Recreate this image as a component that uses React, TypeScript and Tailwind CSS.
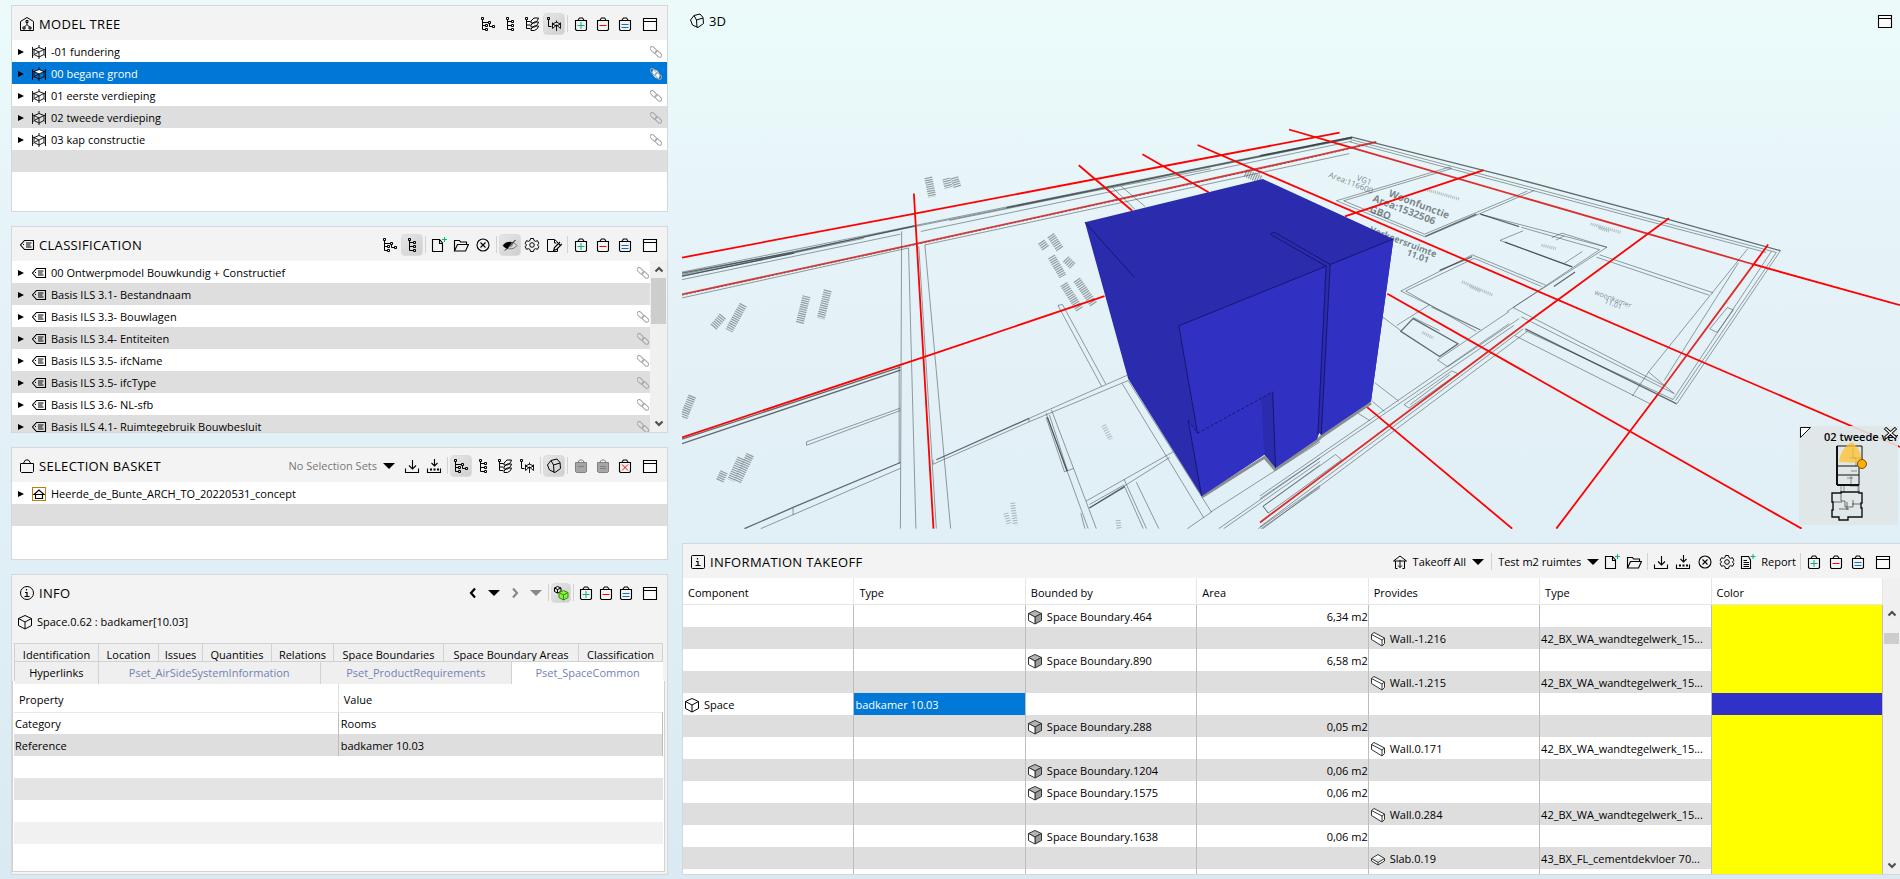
import type { ReactNode } from 'react';

type IconProps = { className?: string };

function Svg({ children, className = 'size-4', label }: { children: ReactNode; className?: string; label?: string }) {
  return (
    <svg viewBox="0 0 16 16" className={`shrink-0 ${className}`} fill="none" stroke="currentColor" aria-label={label}>
      {children}
    </svg>
  );
}

/* ---------- icons ---------- */

const TreeElements = () => (
  <Svg>
    <path d="M1.5 1.5h2v2h-2zM8.5 5.5h2v2h-2zM12.5 9.5h2v2h-2zM5.5 8.5h2v2h-2zM5.5 12.5h2v2h-2zM2.5 4v9.5h3M2.5 6.5h6M2.5 9.5h3M9.5 8v2.5h3" />
  </Svg>
);

const TreeList = () => (
  <Svg>
    <path d="M4.5 1.5h2v2h-2zM9.5 4.5h2v2h-2zM9.5 8.5h2v2h-2zM9.5 12.5h2v2h-2zM5.5 4v9.5h4M5.5 5.5h4M5.5 9.5h4" />
  </Svg>
);

const TreeLayers = () => (
  <Svg>
    <path d="M1.5 1.5h2v2h-2zM2.5 4v8.5h4M2.5 5.5h4M2.5 9h4" />
    <path d="M7 5l3-3h4.500l-1 2.500-3 2.500H7zM7 9l3-3h4.500l-1 2.500-3 2.500H7zM7 13l3-3h4.500l-1 2.500-3 2H7z" />
  </Svg>
);

const TreeStorey = () => (
  <Svg>
    <path d="M1.5 1.5h2v2h-2zM2.5 4v6.5h3" />
    <path d="M6.5 6.5v6M14.5 6.5v6M10.5 4.5v2M10.5 9v6M6.5 8l4-2 4 2-4 2zM6.5 12.500l4-3.500 4 3.500" strokeWidth="0.9" />
  </Svg>
);

const Storey = ({ className = 'size-4' }: IconProps) => (
  <Svg className={className}>
    <path d="M3 5.500L8 3.500l5 2-5 2.500z" strokeWidth="0.9" />
    <path d="M1.500 3v11M14.500 3v11M8 1v2.500M8 8v7M1.500 5L3 5.500v5L8 13l5-2.500v-5l1.500-.5M1.500 12l1.500-1.500M14.500 12L13 10.500M4 10l4-2" fill="none" strokeWidth="0.9" />
  </Svg>
);

const Bag = ({ sign }: { sign: 'add' | 'remove' | 'set' | 'clear' }) => (
  <Svg>
    <path d="M2.500 4.500h11v9l-1 1h-9l-1-1zM5 4l1.500-2h3L11 4" strokeWidth="1.1" />
    {sign === 'add' && <path d="M4.500 9.500h7M8 6v7" stroke="#00b868" />}
    {sign === 'remove' && <path d="M4.500 9.500h7" stroke="#f00" />}
    {sign === 'set' && <path d="M4.500 8.500h7M4.500 11.500h7" stroke="#0c6fc9" />}
    {sign === 'clear' && <path d="M5 6.500l6 6M11 6.500l-6 6" stroke="#f00" />}
  </Svg>
);

const BagOff = ({ sign }: { sign: 'remove' | 'set' }) => (
  <Svg className="size-4 text-[#808080]">
    <path d="M5 4l1.500-2h3L11 4" />
    <path d="M2.500 4.500h11v9l-1 1h-9l-1-1z" fill="#a6a6a6" />
    <path d={sign === 'remove' ? 'M5 8.500h6' : 'M5 8.500h6M5 10.500h6'} />
  </Svg>
);

const Maximize = () => (
  <Svg>
    <path d="M1.500 2.500h13v12h-13zM1.500 5.500h13" fill="#fbfbfb" strokeWidth="1.1" />
  </Svg>
);

const FileNew = () => (
  <Svg>
    <path d="M8.500 2.500h-7v12h10V6zM8.500 2.500v4h3" strokeWidth="1.1" />
    <path d="M13.500 0v5M11 2.500h5" stroke="#00b868" />
  </Svg>
);

const FolderOpen = () => (
  <Svg>
    <path d="M1.500 14V3.500h5l1 1.500h6v2.500M1.500 14l3-6.500h11l-3 6.500z" strokeWidth="1.1" />
  </Svg>
);

const CircleX = () => (
  <Svg>
    <circle cx="8" cy="8" r="6" strokeWidth="1.1" />
    <path d="M5.500 5.500l5 5M10.500 5.500l-5 5" strokeWidth="1.1" />
  </Svg>
);

const EyeHalf = () => (
  <Svg>
    <path d="M1 8.500c3-4.500 11-4.500 14 0-3 4.500-11 4.500-14 0z" stroke="#777" />
    <path d="M1 8.500C3 5.500 6 4.500 10 5.200L5.500 11.500C3.500 11 2 10 1 8.500z" fill="#000" stroke="none" />
    <path d="M10 5.500c2 1.500 1 4.500-2.500 5z" fill="#999" stroke="none" />
    <path d="M3 13.500L13.500 3" />
  </Svg>
);

const Gear = () => (
  <Svg>
    <path d="M6.500 1.500h3l.5 2 1.500.8 2-.6 1.300 2.600-1.300 1.700 1.300 1.700-1.300 2.600-2-.6-1.500.8-.5 2h-3l-.5-2-1.500-.8-2 .6-1.300-2.600L2.500 8 1.200 6.300l1.300-2.600 2 .6L6 3.500z" />
    <circle cx="8" cy="8" r="2.300" />
  </Svg>
);

const FileEdit = () => (
  <Svg>
    <path d="M11.500 6V5L8.500 2.500h-7v12h10V12M8.500 2.500V6h2" />
    <path d="M14 5L8.500 10.500l-.8 2.800 2.800-.8L16 7M12.500 6.500l2 2" strokeWidth="1.200" />
  </Svg>
);

const Import = ({ dots = false }: { dots?: boolean }) => (
  <Svg>
    <path d={dots ? 'M8.500 1v6.500M5.500 5l3 3 3-3' : 'M8.500 2v8.500M5 7.500l3.500 3.500L12 7.500'} strokeWidth="1.1" />
    <path d="M1.500 10.500v4h13v-4" strokeWidth="1.100" />
    {dots && <path d="M4 11.500h2M7.500 11.500h2M11 11.500h2" strokeWidth="2" />}
  </Svg>
);

const ViewCube = () => (
  <Svg>
    <path d="M5 2.500l6-1.500 3 3.500.5 6-5.500 4-5.500-2.500L1.500 7zM5 2.500l2.500 4.500L14 5M7.500 7L8 14.500" strokeWidth="1" />
  </Svg>
);

const Cube = ({ className = 'size-4' }: IconProps) => (
  <Svg className={className}>
    <path d="M8 1.500l6.500 3v7L8 15l-6.500-3.500v-7zM1.500 4.500L8 8l6.500-3.500M8 8v7" />
  </Svg>
);

const CubeShaded = () => (
  <Svg className="size-4 text-[#333]">
    <path d="M1.500 4.500L8 1.500l6.500 3L8 8z" fill="#b5b5b5" />
    <path d="M8 8l6.500-3.500v7L8 15z" fill="#9c9c9c" />
    <path d="M1.500 4.500L8 8v7l-6.500-3.500z" fill="#fff" />
  </Svg>
);

const WallIcon = () => (
  <Svg className="size-4 text-[#333]">
    <path d="M1.500 3.500l2.500-2L14.500 7v5.500L12 15 1.500 8.500zM1.500 3.500L12 9v5.500M12 9l2.500-2" fill="#fff" />
  </Svg>
);

const SlabIcon = () => (
  <Svg className="size-4 text-[#333]">
    <path d="M1.500 7.500L8 3.500l6.500 4v2.500L8 14l-6.500-4zM1.500 7.500L8 11.500l6.500-4M8 11.500V14" fill="#fff" />
  </Svg>
);

const TagIcon = () => (
  <Svg>
    <path d="M5.500 3.500h9v9h-9L1.500 8zM7 6h5.500M7 8h4.500M7 10h5.500" strokeWidth="1.100" />
    <path d="M4 7.500h1" />
  </Svg>
);

const ModelTreeIcon = () => (
  <Svg>
    <path d="M8 1.500l6.500 4v9h-13v-9z" />
    <path d="M7 4.500h2v2H7zM8 6.500v2L5.500 11M8 8.500l2.500 2.500M4 11h2v2H4zM10 11h2v2h-2z" />
  </Svg>
);

const BasketIcon = () => (
  <Svg>
    <path d="M1.500 5.500h13v8l-1 1h-11l-1-1zM4.500 5l2-3h3l2 3" />
  </Svg>
);

const InfoIcon = ({ square = false }: { square?: boolean }) => (
  <Svg>
    {square ? <rect x="1.500" y="1.500" width="13" height="13" rx="1" /> : <circle cx="8" cy="8" r="6.500" />}
    <path d="M7.500 4v1.500M6 7.500h2v4M5.500 11.500h5" strokeWidth="1.200" />
  </Svg>
);

const ModelIcon = () => (
  <Svg>
    <rect x="1.500" y="1.500" width="13" height="13" stroke="#c47a0a" />
    <path d="M3 8.500l5-4.500 5 4.500zM4.500 8.500v4h7v-4" strokeWidth="1.100" />
  </Svg>
);

const TakeoffIcon = () => (
  <Svg>
    <path d="M1.500 7L8 2l6.500 5zM3.500 7v7.500h2M12.500 7v7.500h-2M8 6v7.500M6 11.500l2 2 2-2" />
  </Svg>
);

const ReportIcon = () => (
  <Svg>
    <path d="M8.500 2.500h-7v12h9V6zM3.500 6.500H7M3.500 8.500H9M3.500 10.500H9M3.500 12.500H9" strokeWidth="1.100" />
    <path d="M13 0v5M10.500 2.500h5" stroke="#00b868" />
  </Svg>
);

const SpacePair = () => (
  <Svg>
    <path d="M4.500 1.500l3.500 1.500v3.500L4.500 8 1.500 6.500V3zM1.500 3l3 1.500L8 3M4.500 4.500V8" />
    <path d="M10.500 5.500l4.500 2v5L10.500 15 6 12.500v-5z" fill="#8cf03c" stroke="#2c8a10" />
    <path d="M6 7.500l4.500 2.500L15 7.500M10.500 10v5" stroke="#2c8a10" />
  </Svg>
);

const LinkIcon = ({ lit = false }: { lit?: boolean }) => (
  <svg viewBox="0 0 12 12" className="size-3 shrink-0" fill="none" stroke="#a6a6a6">
    {lit && <ellipse cx="6" cy="6" rx="3" ry="5" transform="rotate(-30 6 6)" fill="#fff" stroke="none" />}
    <rect x="-.5" y="2.200" width="7.500" height="4" rx="2" transform="rotate(45 3.800 4.200)" />
    <rect x="4.700" y="5.800" width="7.500" height="4" rx="2" transform="rotate(45 8.200 7.800)" />
  </svg>
);

const Chevron = ({ d, className = 'text-black' }: { d: string; className?: string }) => (
  <Svg className={`size-4 ${className}`}>
    <path d={d} strokeWidth="2.200" />
  </Svg>
);

const Caret = ({ className = 'text-black' }: IconProps) => (
  <svg viewBox="0 0 12 6" className={`h-[6px] w-3 shrink-0 ${className}`} fill="currentColor">
    <path d="M0 0h12L6 6z" />
  </svg>
);

const Expander = () => (
  <button type="button" aria-label="Expand" className="ml-[6px] flex w-3 shrink-0">
    <svg viewBox="0 0 6 6" className="size-[6px]">
      <path d="M0 0l6 3-6 3z" fill="#000" />
    </svg>
  </button>
);

/* ---------- shared pieces ---------- */

function Tool({ label, pressed, disabled, compact, children }: { label: string; pressed?: boolean; disabled?: boolean; compact?: boolean; children: ReactNode }) {
  return (
    <button
      type="button"
      aria-label={label}
      aria-pressed={pressed}
      disabled={disabled}
      className={`flex shrink-0 items-center justify-center rounded ${compact ? 'size-5' : 'size-[22px]'} ${
        pressed ? 'border border-[#dcdcdc] bg-linear-to-br from-[#e6e6e6] to-[#cfcfcf]' : ''
      }`}
    >
      {children}
    </button>
  );
}

const Sep = () => <span className="mx-[2px] h-[17px] w-px shrink-0 bg-[#d2d2d2]" />;

const BagTools = ({ compact }: { compact?: boolean }) => (
  <>
    <Tool label="Add to basket" compact={compact}><Bag sign="add" /></Tool>
    <Tool label="Remove from basket" compact={compact}><Bag sign="remove" /></Tool>
    <Tool label="Set basket" compact={compact}><Bag sign="set" /></Tool>
  </>
);

const MaximizeTool = () => (
  <div className="ml-[3px]">
    <Tool label="Maximize"><Maximize /></Tool>
  </div>
);

function Panel({ icon, title, tools, edge = 'border', children }: { icon: ReactNode; title: string; tools: ReactNode; edge?: string; children: ReactNode }) {
  return (
    <section className={`flex min-h-0 flex-col overflow-hidden border-[#d4d8d9] bg-white ${edge}`}>
      <header className="flex h-[34px] shrink-0 items-center bg-[#f3f3f3] pt-px pr-[6px] pl-[7px]">
        {icon}
        <h2 className="ml-1 text-[13px] tracking-wide whitespace-nowrap">{title}</h2>
        <div className="ml-auto flex items-center">{tools}</div>
      </header>
      {children}
    </section>
  );
}

function TreeRow({ icon, label, selected, link = true, tight }: { icon: ReactNode; label: string; selected?: boolean; link?: boolean; tight?: boolean }) {
  return (
    <li
      className={`flex h-[22px] items-center pt-px ${tight ? 'pr-px' : 'pr-[5px]'} ${
        selected ? 'bg-[#0078d7] text-white' : 'odd:bg-white even:bg-[#dedede]'
      }`}
    >
      <Expander />
      <span className="ml-[1px] text-black">{icon}</span>
      <span className="ml-1 whitespace-nowrap">{label}</span>
      {link && <span className="ml-auto"><LinkIcon lit={selected} /></span>}
    </li>
  );
}

function ScrollBar({ className, thumb }: { className: string; thumb: string }) {
  return (
    <div className={`flex w-[17px] shrink-0 flex-col items-center bg-[#f0f0f0] ${className}`}>
      <Svg className="h-[17px] w-4 text-[#505050]"><path d="M4.500 10L8 6.500l3.500 3.500" strokeWidth="2.200" /></Svg>
      <div className={`w-[15px] bg-[#cdcdcd] ${thumb}`} />
      <Svg className="mt-auto h-[17px] w-4 text-[#505050]"><path d="M4.500 6L8 9.500 11.500 6" strokeWidth="2.200" /></Svg>
    </div>
  );
}

/* ---------- left column ---------- */

const storeys = ['-01 fundering', '00 begane grond', '01 eerste verdieping', '02 tweede verdieping', '03 kap constructie'];

const classifications = [
  '00 Ontwerpmodel Bouwkundig + Constructief',
  'Basis ILS 3.1- Bestandnaam',
  'Basis ILS 3.3- Bouwlagen',
  'Basis ILS 3.4- Entiteiten',
  'Basis ILS 3.5- ifcName',
  'Basis ILS 3.5- ifcType',
  'Basis ILS 3.6- NL-sfb',
  'Basis ILS 4.1- Ruimtegebruik Bouwbesluit',
];

function ModelTree() {
  return (
    <Panel
      icon={<ModelTreeIcon />}
      title="MODEL TREE"
      tools={
        <>
          <Tool label="Components"><TreeElements /></Tool>
          <Tool label="List"><TreeList /></Tool>
          <Tool label="Layers"><TreeLayers /></Tool>
          <Tool label="Storeys" pressed><TreeStorey /></Tool>
          <Sep />
          <BagTools />
          <MaximizeTool />
        </>
      }
    >
      <ul>
        {storeys.map((s) => (
          <TreeRow
            key={s}
            icon={<Storey className={s.startsWith('00') ? 'size-4 fill-white' : 'size-4'} />}
            label={s}
            selected={s.startsWith('00')}
          />
        ))}
        <li className="h-[22px] bg-[#dedede]" />
      </ul>
    </Panel>
  );
}

function Classification() {
  return (
    <Panel
      icon={<TagIcon />}
      title="CLASSIFICATION"
      tools={
        <>
          <Tool label="Components"><TreeElements /></Tool>
          <Tool label="List" pressed><TreeList /></Tool>
          <Sep />
          <Tool label="New"><FileNew /></Tool>
          <Tool label="Open"><FolderOpen /></Tool>
          <Tool label="Close"><CircleX /></Tool>
          <Sep />
          <Tool label="Hide empty" pressed><EyeHalf /></Tool>
          <Tool label="Settings"><Gear /></Tool>
          <Tool label="Edit"><FileEdit /></Tool>
          <Sep />
          <BagTools />
          <MaximizeTool />
        </>
      }
    >
      <div className="flex min-h-0 flex-1">
        <ul className="min-w-0 flex-1 overflow-hidden">
          {classifications.map((c, i) => (
            <TreeRow key={c} icon={<TagIcon />} label={c} link={i !== 1} tight />
          ))}
        </ul>
        <ScrollBar className="" thumb="h-[46px]" />
      </div>
    </Panel>
  );
}

function SelectionBasket() {
  return (
    <Panel
      icon={<BasketIcon />}
      title="SELECTION BASKET"
      tools={
        <>
          <select aria-label="Selection sets" className="field-sizing-content appearance-none bg-transparent text-[#777]">
            <option>No Selection Sets</option>
          </select>
          <span className="mr-[6px] ml-[6px]"><Caret /></span>
          <Tool label="Import"><Import /></Tool>
          <Tool label="Import set"><Import dots /></Tool>
          <Sep />
          <Tool label="Components" pressed><TreeElements /></Tool>
          <Tool label="List"><TreeList /></Tool>
          <Tool label="Layers"><TreeLayers /></Tool>
          <Tool label="Storeys"><TreeStorey /></Tool>
          <Sep />
          <Tool label="Show in 3D" pressed><ViewCube /></Tool>
          <Sep />
          <Tool label="Remove from basket" disabled><BagOff sign="remove" /></Tool>
          <Tool label="Set basket" disabled><BagOff sign="set" /></Tool>
          <Tool label="Clear basket"><Bag sign="clear" /></Tool>
          <MaximizeTool />
        </>
      }
    >
      <ul>
        <TreeRow icon={<ModelIcon />} label="Heerde_de_Bunte_ARCH_TO_20220531_concept" link={false} />
        <li className="h-[22px] bg-[#dedede]" />
      </ul>
    </Panel>
  );
}

const tabs = ['Identification', 'Location', 'Issues', 'Quantities', 'Relations', 'Space Boundaries', 'Space Boundary Areas', 'Classification'];

function Info() {
  const tab = 'h-full border-t border-r border-[#d2d2d2] bg-[#efefef] text-center leading-[22px] whitespace-nowrap';
  return (
    <Panel
      icon={<InfoIcon />}
      title="INFO"
      tools={
        <>
          <div className="flex gap-px">
            <Tool label="Back" compact><Chevron d="M10 3.500L6 8l4 4.500" /></Tool>
            <Tool label="Back history" compact><Caret /></Tool>
            <Tool label="Forward" compact><Chevron d="M6 3.500L10 8l-4 4.500" className="text-[#888]" /></Tool>
            <Tool label="Forward history" compact><Caret className="text-[#888]" /></Tool>
          </div>
          <Sep />
          <Tool label="Follow selection" pressed compact><SpacePair /></Tool>
          <Sep />
          <BagTools compact />
          <MaximizeTool />
        </>
      }
    >
      <div className="flex min-h-0 flex-1 flex-col bg-[#f3f3f3]">
        <div className="mb-2 flex h-[26px] shrink-0 items-center pl-[5px]">
          <Cube />
          <span className="ml-1">Space.0.62 : badkamer[10.03]</span>
        </div>
        <div role="tablist" className="mr-1 ml-[2px] border-l border-[#d2d2d2]">
          <div className="grid h-[18px] grid-cols-[84fr_60fr_44fr_69fr_62fr_110fr_135fr_84fr]">
            {tabs.map((t) => (
              <button key={t} type="button" role="tab" className={tab}>{t}</button>
            ))}
          </div>
          <div className="relative grid h-5 grid-cols-[84fr_222fr_192fr_151fr]">
            <button type="button" role="tab" className={tab}>Hyperlinks</button>
            <button type="button" role="tab" className={`${tab} text-[#7183b5]`}>Pset_AirSideSystemInformation</button>
            <button type="button" role="tab" className={`${tab} text-[#7183b5]`}>Pset_ProductRequirements</button>
            <button type="button" role="tab" aria-selected="true" className="h-full border-t border-[#d2d2d2] bg-white leading-[18px] whitespace-nowrap text-[#7183b5]">
              Pset_SpaceCommon
            </button>
          </div>
        </div>
        <div className="mr-[2px] mb-[2px] flex min-h-0 flex-1 flex-col overflow-hidden border-r border-b border-l border-[#d2d2d2] bg-white px-px">
          <table className="w-full table-fixed border-collapse">
            <thead>
              <tr className="h-[31px] border-b border-[#e8e8e8] text-left">
                <th className="border-r border-[#e0e0e0] pt-2 pl-[5px] font-normal">Property</th>
                <th className="pt-2 pl-[5px] font-normal">Value</th>
              </tr>
            </thead>
            <tbody>
              <tr className="h-[22px]">
                <td className="border-r border-[#bdbdbd] pt-[2px] pl-px">Category</td>
                <td className="border-r border-[#bdbdbd] pt-[2px] pl-[2px]">Rooms</td>
              </tr>
              <tr className="h-[22px] bg-[#dedede]">
                <td className="border-r border-[#bdbdbd] pt-[2px] pl-px">Reference</td>
                <td className="border-r border-[#bdbdbd] pt-[2px] pl-[2px]">badkamer 10.03</td>
              </tr>
            </tbody>
          </table>
          <div className="mt-[22px] h-[22px] shrink-0 bg-[#e4e4e4]" />
          <div className="mt-[22px] h-[22px] shrink-0 bg-[#f1f1f1]" />
        </div>
      </div>
    </Panel>
  );
}

/* ---------- 3D view ---------- */

const westLines = `
M5 790L575 655L1646 398M5 797L575 658L1646 402M5 803L450 692M5 812L540 680M590 672L1646 410M660 640L1000 558L1300 490
M5 865L560 720M600 711L1640 446M543 672L540 1535M560 720L578 1535M585 715L628 1535M600 711L663 1535
M310 1283L540 1185M310 1293L540 1192M310 1283V1293M537 1062V1345M198 1535L540 1360M277 1475V1495
M620 1348L855 1225L1098 1105M855 1215L1095 1090M855 1215V1225M620 1335V1348
M926 887L1033 1122M937 884L1043 1115M926 887L937 884M897 1212L942 1370L965 1360M905 1205L950 1368M910 1190L1020 1535M897 1200L1000 1535
M1083 1113L1283 1503M1098 1105L1302 1487M995 1455L1208 1312M1003 1475L1200 1328M1003 1465L1088 1408
M1088 1392L1143 1535M1090 1415L1135 1535M1118 1400L1173 1535M982 1490L992 1535
M1060 545L1115 608M1080 540L1140 600M1300 1487L1568 1283M1243 1535L1302 1487
M1320 1535L1568 1330M1332 1535L1568 1340M1568 1350L1428 1470L1442 1490M1417 1535L1568 1410M1424 1535L1568 1416`;

const westHeavy = `
M5 793L280 732L575 656M5 801L280 735M800 603L1000 555L1250 495L1646 400M5 1275L540 1066M5 1288L540 1075
M158 1535L280 1472L540 1343M628 1335L855 1215M900 1212L948 1368M1003 1475L1090 1413`;

const eastLines = `
M222 405L1265 733L1018 1163M220 412L1240 733M1253 730L1012 1160M1195 722L952 1080M1172 763L990 1105M1275 728L1020 1175
M1015 1143L640 920M1012 1160L650 960M955 1172L625 975M990 1120L620 893M952 1080L912 1150M952 1080L1015 1143
M465 485L187 583L405 688L672 553M468 490L205 583L403 680L655 555M465 485L470 490
M540 622L850 718L620 893M645 670L588 698L765 775M715 690L740 677L850 718M725 697L745 685M640 660L832 725L605 905M832 740L1110 850M825 747L1100 857M790 730L745 765
M520 740L345 845L540 958M525 750L357 845L530 962M520 740L700 828M525 750L690 832M610 905L435 1045L460 1065L635 925
M415 885L335 945M420 892L540 958M300 920L345 960M375 922L440 960
M610 940L305 1190L0 1440M622 945L0 1448M645 955L0 1530M655 962L5 1537
M470 1077L353 1175L365 1185L485 1085ZM465 1088L368 1175M185 1320L8 1470L20 1490L200 1335Z
M282 1112L340 1165M275 1165L305 1195M240 1200L270 1222M1145 893L1160 900L1120 965L1102 955Z`;

const eastHeavy = `
M0 452L225 398L625 518L1000 637L1275 728M540 622L635 658M600 703L765 775M375 925L485 998L440 1035L345 962ZM440 785L520 745M405 686L530 622M720 832L772 790M1020 1172L650 955`;

// Lettering too foreshortened to read, drawn as hatched strokes.
const hatchLabels = `
M608 515L618 572M652 518L658 545M672 515L680 545M310 860L293 940M362 843L345 925M155 885L120 960M105 918L82 950
M30 1150L8 1215M172 1320L140 1400M150 1330L125 1395M108 1370L97 1398M908 683L932 725M885 702L897 722
M910 745L938 802M945 752L962 772M940 825L980 900M972 812L1014 885M1385 502L1425 522`;

const faintLabels = 'M1038 1235L1055 1275M815 1460L822 1525M798 1490L806 1520M1073 1510L1076 1535';

const planLabels = [
  { x: 1356, y: 180, size: 8, text: 'VG1' },
  { x: 1328, y: 177, size: 8, text: 'Area:116600' },
  { x: 1388, y: 196, size: 10, text: 'Woonfunctie' },
  { x: 1372, y: 201, size: 10, text: 'Area:1532506' },
  { x: 1369, y: 212, size: 10, text: 'GBO' },
  { x: 1369, y: 232, size: 9, text: 'Verkeersruimte' },
  { x: 1406, y: 255, size: 9, text: '11.01' },
  { x: 1594, y: 294, size: 7, text: 'woonkamer' },
  { x: 1604, y: 303, size: 7, text: '11.01' },
];

function Scene() {
  const west = 'translate(680 0) scale(.40816 .34439)';
  const east = 'translate(1260 0) scale(.40816 .34439)';
  return (
    <svg viewBox="682 0 1218 529" preserveAspectRatio="xMidYMax slice" className="size-full [&_path]:[vector-effect:non-scaling-stroke]" fill="none">
      <g stroke="#3c4648" strokeOpacity="0.65" strokeWidth="0.8">
        <path transform={west} d={westLines} />
        <path transform={east} d={eastLines} />
      </g>
      <g stroke="#2a3032" strokeOpacity="0.7" strokeWidth="1.300">
        <path transform={west} d={westHeavy} />
        <path transform={east} d={eastHeavy} />
      </g>
      <g transform={west} stroke="#4c5658">
        <path d={hatchLabels} strokeWidth="8" strokeDasharray="1.200 1" strokeOpacity="0.55" />
        <path d={faintLabels} strokeWidth="5" strokeDasharray="1 1.500" strokeOpacity="0.4" />
      </g>
      <path
        transform={east}
        d="M405 550L488 578M810 650L885 675M830 662L855 672M495 818L570 857M515 832L540 846M690 712L725 722M398 965L425 982"
        stroke="#5a6466" strokeWidth="3" strokeDasharray="1 1" strokeOpacity="0.4"
      />
      {planLabels.map((l) => (
        <text
          key={l.text + l.x}
          transform={`translate(${l.x} ${l.y}) rotate(21)`}
          fontSize={l.size}
          fontWeight={l.size > 8 ? 700 : 400}
          fill="#3c4648"
          fillOpacity="0.65"
        >
          {l.text}
        </text>
      ))}

      {/* grid axes */}
      <g stroke="#f00" strokeWidth="1.800">
        <path transform={west} d="M5 748L575 620L1616 385M5 1270L597 1037L1040 860M573 562L621 1535M977 480L1108 612M1133 448L1295 558M1268 421L1421 499" />
        <path transform={east} d="M0 498L1568 1298M71 376L222 428M1210 768L1568 886M548 494L208 628M1002 634L650 940M1245 710L1205 775M975 1145L726 1535M312 853L1327 1535M260 1180L618 1535" />
      </g>
      <g stroke="#dd1616" strokeWidth="1.800">
        <path transform={west} d="M5 855L575 709L1568 450L1706 412" strokeOpacity="0.85" />
        <path transform={east} d="M222 428L1210 768M1205 775L975 1145M650 940L0 1517" strokeOpacity="0.9" />
      </g>
      <path transform={west} d="M5 857L575 711L1568 452L1706 414" stroke="#555" strokeDasharray="2 2" strokeWidth="1" strokeOpacity="0.7" />

      {/* selected space */}
      <g transform={west}>
        <path d="M1278 1443L1432 1328L1458 1363L1561 1280L1571 1268L1693 1170" stroke="#8b8f90" strokeWidth="3" />
        <path d="M992 645L1428 520L1748 694L1693 1165L1571 1263L1566 1257L1561 1275L1459 1358L1432 1320L1278 1440L1098 1100Z" fill="#2b2bae" />
        <path d="M1222 946L1583 773L1561 1275L1459 1358L1452 1138L1425 1155L1432 1320L1278 1440L1245 1220L1268 1258Z" fill="#3030c2" />
        <path d="M1593 768L1748 694L1693 1165L1571 1263Z" fill="#3030c2" />
        <path d="M1425 1155L1452 1138L1459 1358L1432 1320Z" fill="#2b2bae" />
        <path
          d="M992 645L1113 805M1222 946L1583 773L1563 1260M1593 768L1748 694M1593 768L1571 1263M1456 674L1593 768M1446 680L1583 773M1222 946L1268 1258M1452 1138L1459 1358M1245 1220L1278 1440M1456 674L1446 680"
          stroke="#14146a" strokeWidth="0.900"
        />
        <path d="M1268 1258L1452 1138M1245 1220L1268 1258" stroke="#14146a" strokeDasharray="3 2" strokeWidth="0.900" />
      </g>
    </svg>
  );
}

function MiniMap() {
  return (
    <div className="absolute right-[2px] bottom-1 h-[99px] w-[99px] overflow-hidden bg-[#e0e5e7]/90">
      <span className="absolute top-[3px] left-[25px] font-semibold whitespace-nowrap">02 tweede ver</span>
      <svg viewBox="0 0 99 99" className="absolute inset-0" fill="none" stroke="#111">
        <path d="M1.500 1.500h10l-10 10z" fill="#fff" />
        <path d="M38 20H63V38M38 20V59M60 39V59M38 40H60M38 49H60M38 59H60" />
        <path d="M38 20V59M38 59H60" strokeWidth="2" />
        <path d="M54 22v10h8M51 32h6v8M52 45h6M52 50v8M48 52h6M45 60v6M42 60v6M51 60h8v5M60 59v7M42 66h3" strokeWidth="0.700" strokeOpacity="0.6" />
        <path d="M33 67H42V66H60V67H63V77H62V82H63V91H49V94H40V91H33V84H34V76H33Z" strokeWidth="1.400" />
        <path d="M42 67v8h4v6h8v-7M48 76v8M34 76h9M53 78h9M40 83h10" strokeWidth="0.800" strokeOpacity="0.7" />
        <path d="M62 37L40 36C41 28 45 20 53 16C60 22 63 28 62 37Z" fill="#ffc02a" fillOpacity="0.75" stroke="none" />
        <circle cx="63" cy="38" r="4.500" fill="#ffad00" stroke="#7a5200" />
      </svg>
      <button type="button" aria-label="Close map" className="absolute top-px right-px">
        <svg viewBox="0 0 13 12" className="h-3 w-[13px]">
          <path d="M1 1l11 10M12 1L1 11" stroke="#000" strokeWidth="3.200" />
          <path d="M1.500 1.500l10 9M11.500 1.500l-10 9" stroke="#fff" strokeWidth="1.400" />
        </svg>
      </button>
    </div>
  );
}

function Viewport() {
  return (
    <section className="relative min-h-0 overflow-hidden">
      <Scene />
      <header className="absolute inset-x-0 top-0 flex h-[42px] items-center pr-1 pl-[7px]">
        <ViewCube />
        <h2 className="ml-1 text-[13px]">3D</h2>
        <div className="ml-auto"><Tool label="Maximize"><Maximize /></Tool></div>
      </header>
      <MiniMap />
    </section>
  );
}

/* ---------- information takeoff ---------- */

type Row = { bound?: string; area?: string; provides?: string; type?: string; space?: string };

const TILE = '42_BX_WA_wandtegelwerk_15...';

const rows: Row[] = [
  { bound: 'Space Boundary.464', area: '6,34 m2' },
  { provides: 'Wall.-1.216', type: TILE },
  { bound: 'Space Boundary.890', area: '6,58 m2' },
  { provides: 'Wall.-1.215', type: TILE },
  { space: 'badkamer 10.03' },
  { bound: 'Space Boundary.288', area: '0,05 m2' },
  { provides: 'Wall.0.171', type: TILE },
  { bound: 'Space Boundary.1204', area: '0,06 m2' },
  { bound: 'Space Boundary.1575', area: '0,06 m2' },
  { provides: 'Wall.0.284', type: TILE },
  { bound: 'Space Boundary.1638', area: '0,06 m2' },
  { provides: 'Slab.0.19', type: '43_BX_FL_cementdekvloer 70...' },
];

const columns = ['Component', 'Type', 'Bounded by', 'Area', 'Provides', 'Type', 'Color'];

function Takeoff() {
  const cell = 'h-[22px] overflow-hidden border-r border-[#bdbdbd] p-0 pt-px whitespace-nowrap';
  return (
    <Panel
      icon={<InfoIcon square />}
      title="INFORMATION TAKEOFF"
      edge="border-y border-l"
      tools={
        <>
          <button type="button" className="flex items-center pr-[5px]">
            <TakeoffIcon />
            <span className="mr-[6px] ml-[5px]">Takeoff All</span>
            <Caret />
          </button>
          <Sep />
          <label className="flex items-center gap-[6px] pl-1">
            <select aria-label="Takeoff definition" className="field-sizing-content appearance-none bg-transparent">
              <option>Test m2 ruimtes</option>
            </select>
            <Caret />
          </label>
          <span className="w-[2px]" />
          <Tool label="New"><FileNew /></Tool>
          <Tool label="Open"><FolderOpen /></Tool>
          <Sep />
          <Tool label="Import"><Import /></Tool>
          <Tool label="Import set"><Import dots /></Tool>
          <Tool label="Close"><CircleX /></Tool>
          <Tool label="Settings"><Gear /></Tool>
          <button type="button" className="flex items-center gap-[5px] px-[2px]">
            <ReportIcon />
            Report
          </button>
          <Sep />
          <BagTools />
          <MaximizeTool />
        </>
      }
    >
      <div className="flex min-h-0 flex-1">
        <div className="min-w-0 flex-1 overflow-hidden">
          <table className="w-full table-fixed border-separate border-spacing-0">
            <thead>
              <tr className="text-left">
                {columns.map((c, i) => (
                  <th key={i} className="h-[27px] border-r border-b border-[#e6e6e6] p-0 pt-[3px] pl-[5px] font-normal">{c}</th>
                ))}
              </tr>
            </thead>
            <tbody>
              {rows.map((r, i) => (
                <tr key={i} className="odd:bg-white even:bg-[#dedede]">
                  <td className={cell}>
                    {r.space && <span className="flex items-center gap-1 pl-px"><Cube /> Space</span>}
                  </td>
                  <td className={`${cell} ${r.space ? 'bg-[#0078d7] text-white' : ''}`}>
                    <span className="pl-px">{r.space}</span>
                  </td>
                  <td className={cell}>
                    {r.bound && <span className="flex items-center gap-1 pl-px"><CubeShaded /> {r.bound}</span>}
                  </td>
                  <td className={`${cell} text-right`}>{r.area}</td>
                  <td className={cell}>
                    {r.provides && (
                      <span className="flex items-center gap-1 pl-px">
                        {r.provides.startsWith('Slab') ? <SlabIcon /> : <WallIcon />} {r.provides}
                      </span>
                    )}
                  </td>
                  <td className={`${cell} pl-px`}>{r.type}</td>
                  <td className={`${cell} ${r.space ? 'bg-[#3131ca]' : 'bg-[#ff0]'}`} />
                </tr>
              ))}
              <tr className="bg-white">
                <td className={cell} />
                <td className={cell} />
                <td className={cell}><span className="flex pl-px"><CubeShaded /></span></td>
                <td className={cell} />
                <td className={cell} />
                <td className={cell} />
                <td className={`${cell} bg-[#ff0]`} />
              </tr>
            </tbody>
          </table>
        </div>
        <ScrollBar className="pt-[27px]" thumb="mt-[11px] h-[11px]" />
      </div>
    </Panel>
  );
}

export default function App() {
  return (
    <main className="grid h-screen grid-cols-[minmax(0,657fr)_minmax(0,1218fr)] gap-x-[14px] overflow-hidden bg-linear-to-b from-[#ecfbfa] via-[#e6f4f9] via-25% to-[#dbe9f2] pl-[11px] font-['Open_Sans','Noto_Sans',sans-serif] text-[11px] leading-4 text-black">
      <div className="grid min-h-0 grid-rows-[minmax(0,207fr)_minmax(0,207fr)_minmax(0,113fr)_minmax(0,301fr)] gap-y-[14px] pt-[5px] pb-1">
        <ModelTree />
        <Classification />
        <SelectionBasket />
        <Info />
      </div>
      <div className="grid min-h-0 grid-rows-[minmax(0,529fr)_minmax(0,332fr)] gap-y-[14px] pb-1">
        <Viewport />
        <Takeoff />
      </div>
    </main>
  );
}
